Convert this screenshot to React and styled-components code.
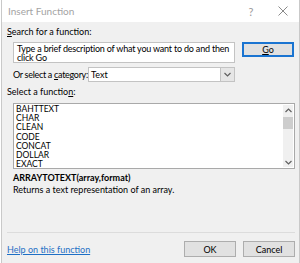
import React from 'react'
import styled, { createGlobalStyle } from 'styled-components'

const Global = createGlobalStyle`
  html, body { margin: 0; padding: 0; background: #ffffff; }
  body { font-family: Lato, "Noto Sans", sans-serif; font-size: 9px; line-height: 11px; color: #000; }
`

const Window = styled.div`
  width: 297px;
  height: 263px;
  margin-left: 1px;
  border-left: 1px solid #c9c9c9;
  border-right: 1px solid #c9c9c9;
  background: #f0f0f0;
  display: flex;
  flex-direction: column;
  overflow: hidden;
`

const TitleBar = styled.div`
  height: 22px;
  flex: none;
  background: #ffffff;
  display: flex;
  align-items: center;
  padding-left: 6px;
  color: #a3a3a3;
  font-size: 10px;
`

const Title = styled.span`
  flex: 1;
`

const TitleButton = styled.span`
  width: 32px;
  display: flex;
  justify-content: center;
  color: #9a9a9a;
  font-size: 11px;
`

const Body = styled.div`
  flex: 1;
  display: flex;
  flex-direction: column;
  padding: 5px 4px 0 5px;
`

const Label = styled.div`
  height: 10px;
  line-height: 10px;
  margin-top: ${p => p.$top || 0}px;
  u { text-decoration: underline; }
`

const SearchRow = styled.div`
  display: flex;
  gap: 7px;
  margin-top: 5px;
  padding-left: 6px;
`

const SearchBox = styled.div`
  width: 222px;
  height: 21px;
  background: #fff;
  border: 1px solid #c3c3c3;
  box-sizing: border-box;
  padding: 1px 2px 1px 3px;
  line-height: 9px;
  font-size: 9px;
  letter-spacing: -0.2px;
`

const Button = styled.div`
  width: 52px;
  height: ${p => p.$tall ? 16 : 15}px;
  box-sizing: border-box;
  border: 1px solid ${p => p.$focus ? '#1a74d1' : '#adadad'};
  box-shadow: ${p => p.$focus ? 'inset 0 0 0 1px #1a74d1' : 'none'};
  background: #e1e1e1;
  display: flex;
  align-items: center;
  justify-content: center;
  font-size: 9px;
  u { text-decoration: underline; }
`

const CategoryRow = styled.div`
  display: flex;
  align-items: center;
  height: 15px;
  margin-top: 4px;
  padding-left: 6px;
  gap: 1px;
`

const CategoryLabel = styled.span`
  width: 74px;
  white-space: nowrap;
  letter-spacing: -0.3px;
`

const Select = styled.div`
  width: 147px;
  height: 15px;
  box-sizing: border-box;
  border: 1px solid #c3c3c3;
  background: #fff;
  display: flex;
  align-items: center;
`

const SelectValue = styled.span`
  flex: 1;
  padding-left: 2px;
`

const SelectArrow = styled.span`
  width: 13px;
  height: 13px;
  background: #e6e6e6;
  border-left: 1px solid #c3c3c3;
  display: flex;
  align-items: center;
  justify-content: center;
`

const ListBox = styled.div`
  margin: 6px 0 0 6px;
  width: 282px;
  height: 66px;
  flex: none;
  box-sizing: border-box;
  border: 1px solid #a9a9a9;
  background: #fff;
  display: flex;
`

const Items = styled.div`
  flex: 1;
  padding: 1px 0 0 2px;
`

const Item = styled.div`
  height: 9.2px;
  line-height: 9.2px;
  font-size: 8.5px;
`

const ScrollBar = styled.div`
  width: 10px;
  margin: 1px 1px 1px 0;
  background: #f0f0f0;
  display: flex;
  flex-direction: column;
  align-items: center;
`

const ScrollBtn = styled.div`
  height: 10px;
  display: flex;
  align-items: center;
  justify-content: center;
`

const Thumb = styled.div`
  width: 10px;
  height: 12px;
  margin-top: 2px;
  background: #cdcdcd;
`

const Track = styled.div`
  flex: 1;
`

const Syntax = styled.div`
  margin: 3px 0 0 6px;
  font-weight: 700;
  height: 11px;
  line-height: 11px;
`

const Desc = styled.div`
  margin: 1px 0 0 6px;
  height: 11px;
  line-height: 11px;
`

const Separator = styled.div`
  margin-top: 37px;
  height: 1px;
  flex: none;
  background: #dcdcdc;
  width: 288px;
`

const Footer = styled.div`
  display: flex;
  align-items: center;
  margin-top: 8px;
  gap: 7px;
`

const Link = styled.a`
  color: #1f6fc5;
  text-decoration: underline;
  flex: 1;
`

const Chevron = ({ dir }) => (
  <svg width="7" height="5" viewBox="0 0 7 5">
    <path d={dir === 'up' ? 'M0.5 4 L3.5 1 L6.5 4' : 'M0.5 1 L3.5 4 L6.5 1'} fill="none" stroke="#606060" strokeWidth="1.2" />
  </svg>
)

const CloseIcon = () => (
  <svg width="10" height="10" viewBox="0 0 10 10">
    <path d="M0.5 0.5 L9.5 9.5 M9.5 0.5 L0.5 9.5" stroke="#8a8a8a" strokeWidth="1" />
  </svg>
)

const functions = ['BAHTTEXT', 'CHAR', 'CLEAN', 'CODE', 'CONCAT', 'DOLLAR', 'EXACT']

export default function App() {
  return (
    <>
      <Global />
      <Window>
        <TitleBar>
          <Title>Insert Function</Title>
          <TitleButton>?</TitleButton>
          <TitleButton><CloseIcon /></TitleButton>
        </TitleBar>
        <Body>
          <Label><u>S</u>earch for a function:</Label>
          <SearchRow>
            <SearchBox>Type a brief description of what you want to do and then click Go</SearchBox>
            <Button $focus><u>G</u>o</Button>
          </SearchRow>
          <CategoryRow>
            <CategoryLabel>Or select a <u>c</u>ategory:</CategoryLabel>
            <Select>
              <SelectValue>Text</SelectValue>
              <SelectArrow><Chevron dir="down" /></SelectArrow>
            </Select>
          </CategoryRow>
          <Label $top={5}>Select a functio<u>n</u>:</Label>
          <ListBox>
            <Items>
              {functions.map(f => <Item key={f}>{f}</Item>)}
            </Items>
            <ScrollBar>
              <ScrollBtn><Chevron dir="up" /></ScrollBtn>
              <Thumb />
              <Track />
              <ScrollBtn><Chevron dir="down" /></ScrollBtn>
            </ScrollBar>
          </ListBox>
          <Syntax>ARRAYTOTEXT(array,format)</Syntax>
          <Desc>Returns a text representation of an array.</Desc>
          <Separator />
          <Footer>
            <Link>Help on this function</Link>
            <Button $tall>OK</Button>
            <Button $tall>Cancel</Button>
          </Footer>
        </Body>
      </Window>
    </>
  )
}
